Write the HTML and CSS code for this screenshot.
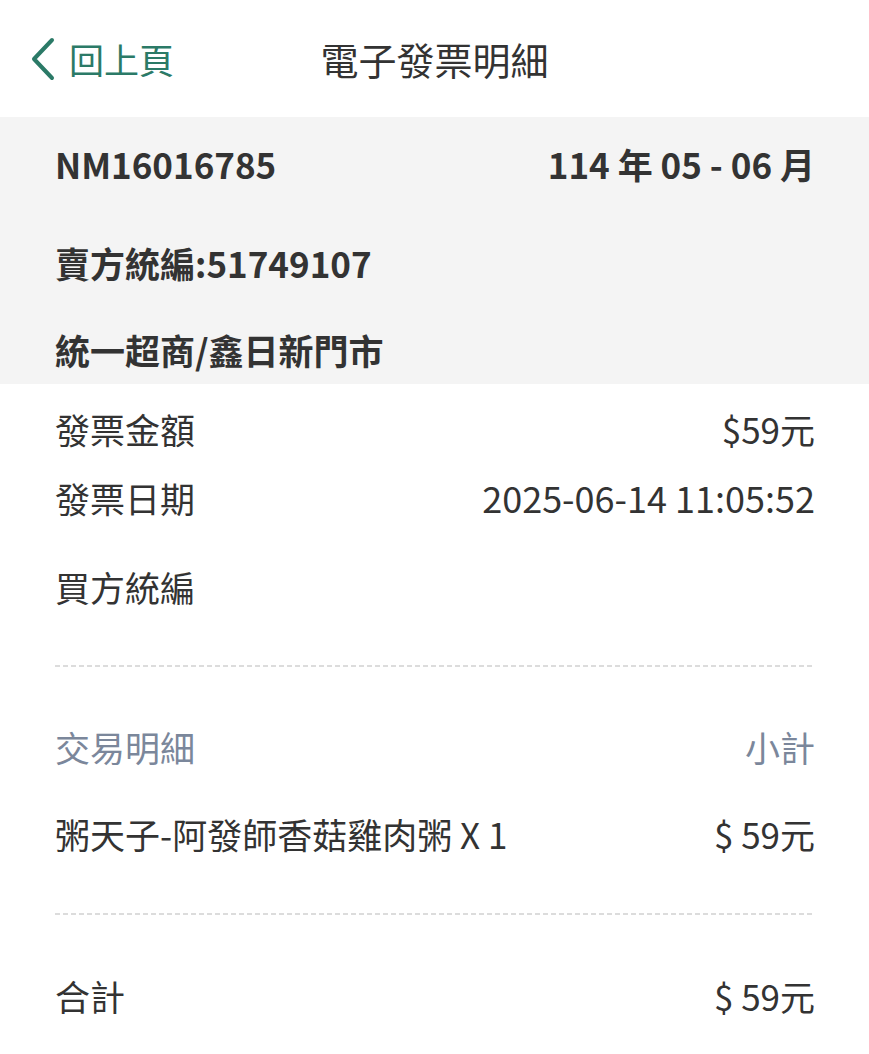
FILE: index.html
```html
<!DOCTYPE html>
<html lang="zh-TW">

<head>
    <meta charset="UTF-8">
    <meta name="viewport" content="width=device-width, initial-scale=1.0">
    <title>電子發票明細</title>
    <link rel="stylesheet" href="styles.css">
</head>

<body>
    <!-- 頁首 -->
    <div class="topbar">
        <a class="back" href="#">
            <svg class="back-icon" width="28" height="44" viewBox="0 0 28 44">
                <path d="M23 3 L5 22 L23 41" fill="none" stroke="#2b7a67" stroke-width="4" stroke-linecap="round" stroke-linejoin="round" />
            </svg>
            <span>回上頁</span>
        </a>
        <h1 class="title">電子發票明細</h1>
        <div></div>
    </div>

    <!-- 發票基本資料 -->
    <div class="summary">
        <div class="row first">
            <span>NM16016785</span>
            <span>114 年 05 - 06 月</span>
        </div>
        <div class="row second">
            <span>賣方統編:51749107</span>
        </div>
        <div class="row third">
            <span>統一超商/鑫日新門市</span>
        </div>
    </div>

    <div class="detail">
        <div class="row amount">
            <span>發票金額</span>
            <span>$59元</span>
        </div>
        <div class="row date">
            <span>發票日期</span>
            <span class="num">2025-06-14 11:05:52</span>
        </div>
        <div class="row buyer">
            <span>買方統編</span>
        </div>

        <div class="dash dash-one"></div>

        <div class="row head">
            <span>交易明細</span>
            <span>小計</span>
        </div>
        <div class="row item">
            <span>粥天子-阿發師香菇雞肉粥 X 1</span>
            <span>$ 59元</span>
        </div>

        <div class="dash dash-two"></div>

        <div class="row total">
            <span>合計</span>
            <span>$ 59元</span>
        </div>
    </div>
</body>

</html>
```

FILE: styles.css
```css
body {
    margin: 0;
    font-family: "Noto Sans CJK TC", "Noto Sans", sans-serif;
    font-size: 35px;
    color: #333;
    background-color: #fff;
}

.topbar {
    height: 117px;
    display: grid;
    grid-template-columns: 1fr auto 1fr;
    align-items: center;
}

.back {
    display: flex;
    align-items: center;
    gap: 12px;
    padding-left: 29px;
    color: #2b7a67;
    text-decoration: none;
    font-size: 35px;
}

.title {
    margin: 0;
    font-size: 38px;
    font-weight: normal;
    color: #333;
}

.row {
    display: flex;
    justify-content: space-between;
    align-items: center;
    height: 50px;
    padding: 0 54px 0 55px;
}

.num {
    font-size: 36px;
}

.summary {
    background-color: #f4f4f4;
    padding: 21px 0 10px;
    font-weight: bold;
}

.summary .second {
    margin-top: 49px;
}

.summary .third {
    margin-top: 37px;
}

.detail .amount {
    margin-top: 19px;
}

.detail .date {
    margin-top: 19px;
}

.detail .buyer {
    margin-top: 39px;
}

.dash {
    height: 2px;
    margin: 0 54px 0 55px;
    background-image: linear-gradient(to right, #dcdcdc 5px, transparent 5px);
    background-size: 8px 2px;
}

.dash-one {
    margin-top: 54px;
}

.dash-two {
    margin-top: 55px;
}

.head {
    margin-top: 54px;
    color: #7b879b;
}

.item {
    margin-top: 37px;
}

.total {
    margin-top: 55px;
}
```
